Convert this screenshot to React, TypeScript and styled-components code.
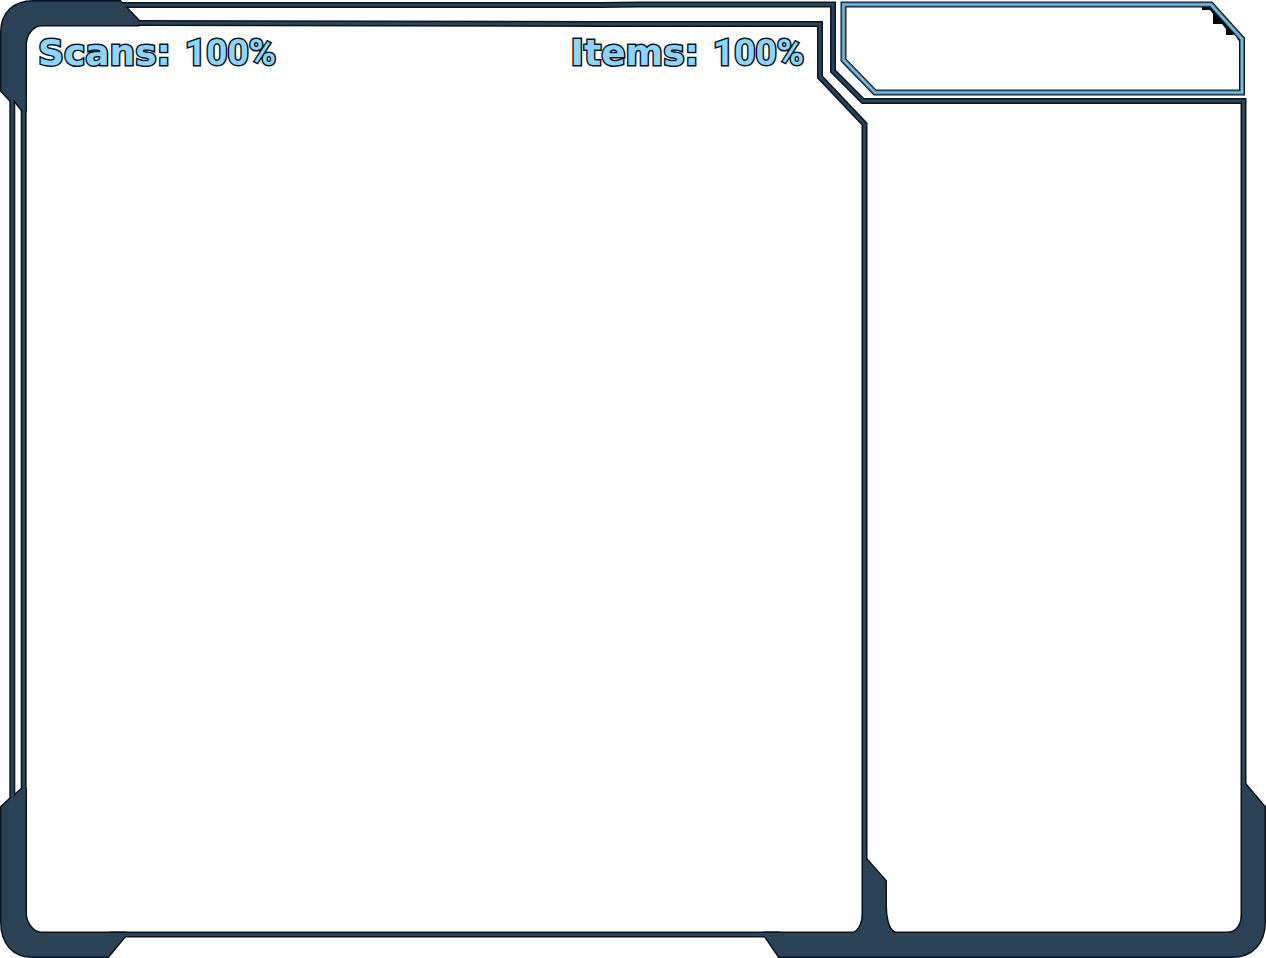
import React from "react";
import styled, { createGlobalStyle } from "styled-components";

const colors = {
  outline: "#0a141d",
  steel: "#2c4257",
  glowEdge: "#3f7590",
  glow: "#7dbbdd",
  text: "#8fd3ff",
};

const GlobalStyle = createGlobalStyle`
  body {
    margin: 0;
    background: #ffffff;
  }
`;

const Screen = styled.main`
  display: grid;
  grid-template-columns: 820fr 446fr;
  width: 100%;
`;

const FrameArt = styled.svg`
  grid-area: 1 / 1 / 2 / 3;
  display: block;
  width: 100%;
  height: auto;
`;

const Stats = styled.header`
  grid-area: 1 / 1 / 2 / 2;
  display: flex;
  justify-content: space-between;
  align-items: flex-start;
  padding: 32px 16px 0 38px;
`;

const Stat = styled.p`
  display: flex;
  align-items: baseline;
  gap: 14px;
  margin: 0;
  color: ${colors.text};
  line-height: 42px;
  font-weight: 700;
  white-space: nowrap;
  -webkit-text-stroke: 3px ${colors.outline};
  paint-order: stroke fill;
`;

const StatLabel = styled.span`
  font-family: "DejaVu Sans", sans-serif;
  font-size: 36px;
`;

const StatValue = styled.span`
  font-family: Roboto, sans-serif;
  font-size: 37px;
`;

const rails = [
  "M120 5 H600 L640 4.5 H833 V71 L863 101 H1243.5 V920",
  "M130 23 L600 24 H820 V77 L864.5 124 V920",
  "M12.3 96 V800",
  "M23.7 96 V800",
  "M110 934.5 H780",
];

const plates = [
  "M1.5 91 V32 C1.5 13 14 1.5 33 1.5 H120 L138 20 V25 H42 C32 25 25.5 35 25.5 45 V110 H22 L15 101 V100 H10 Z",
  "M10 799 L1.5 807 V922 C1.5 943 13 956.5 33 956.5 H108 L125 936 V933 H41 C33 933 25.5 923 25.5 913 V789 H22 L14 796 V799 Z",
  "M765 936 L779 956.5 H1232 C1252 956.5 1264.5 943 1264.5 922 V807 L1245 784 H1242.5 V912 C1242.5 923 1238 933 1228 933 H895 C887 930 885.5 914 885.5 906 V881 L866 859 H863.5 V912 C863.5 921 860 930 854 933 H765 Z",
];

const PANEL = "M843.5 4.5 H1211 L1242 39 V92.5 H875 L843.5 60 Z";

type LayerProps = { color: string; railWidth: number; plateStroke: number };

function SteelLayer({ color, railWidth, plateStroke }: LayerProps) {
  return (
    <g stroke={color}>
      {rails.map((d) => (
        <path key={d} d={d} fill="none" strokeWidth={railWidth} />
      ))}
      {plates.map((d) => (
        <path key={d} d={d} fill={color} strokeWidth={plateStroke} />
      ))}
    </g>
  );
}

function Frame() {
  return (
    <FrameArt viewBox="0 0 1266 958" aria-hidden="true">
      <SteelLayer color={colors.outline} railWidth={6} plateStroke={3} />
      <SteelLayer color={colors.steel} railWidth={3} plateStroke={0} />
      <path
        d="M1202 6 H1212 L1245 38 V48 L1240 43 L1237 38 V34 L1232 35 H1226 V29 L1222 24 H1213 V14 L1210 10 H1202 Z"
        fill="#05090c"
      />
      <g fill="none">
        <path d={PANEL} stroke={colors.outline} strokeWidth={6} />
        <path d={PANEL} stroke={colors.glowEdge} strokeWidth={4} />
        <path d={PANEL} stroke={colors.glow} strokeWidth={2} />
      </g>
    </FrameArt>
  );
}

export default function App() {
  return (
    <>
      <GlobalStyle />
      <Screen>
        <Frame />
        <Stats>
          <Stat>
            <StatLabel>Scans:</StatLabel>
            <StatValue>100%</StatValue>
          </Stat>
          <Stat>
            <StatLabel>Items:</StatLabel>
            <StatValue>100%</StatValue>
          </Stat>
        </Stats>
      </Screen>
    </>
  );
}
